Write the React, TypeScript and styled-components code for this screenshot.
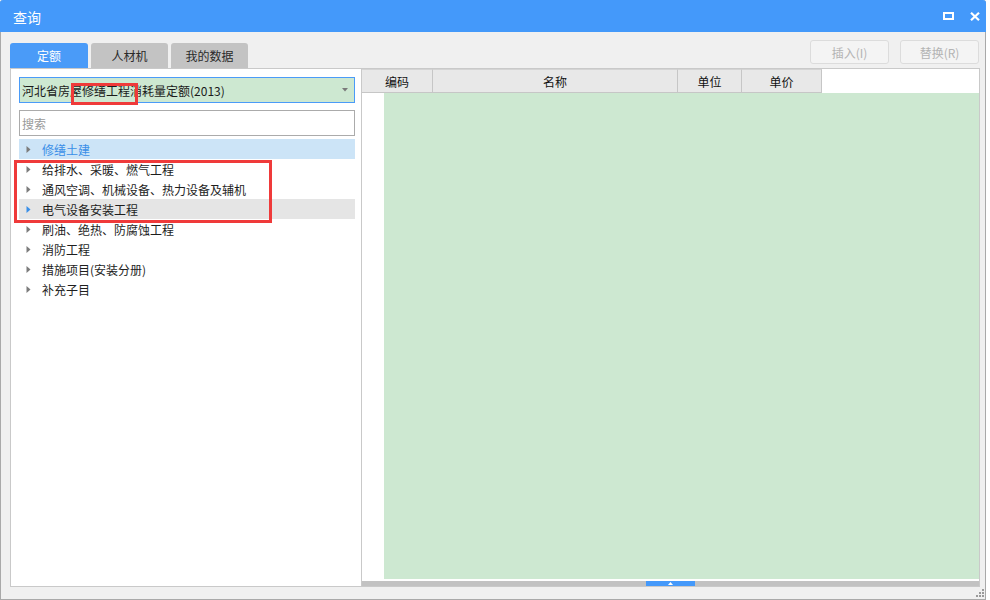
import React from 'react';
import styled, { createGlobalStyle } from 'styled-components';

const Global = createGlobalStyle`
  html, body { margin: 0; padding: 0; background: #ffffff; }
  body {
    font-family: "Noto Sans CJK SC", "Microsoft YaHei", "Liberation Sans", sans-serif;
    font-size: 12px;
    color: #1e1e1e;
  }
  * { box-sizing: border-box; }
`;

const Window = styled.div`
  position: relative;
  width: 986px;
  height: 600px;
  border: 1px solid #a9a9a9;
  border-top: none;
  border-radius: 3px 3px 0 0;
  background: #f0f0f0;
  display: flex;
  flex-direction: column;
`;

const TitleBar = styled.div`
  height: 32px;
  background: #4499fa;
  border-radius: 3px 3px 0 0;
  display: flex;
  align-items: center;
  padding: 0 5px 0 12px;
  color: #ffffff;
  font-size: 14px;
  margin: 0 -1px;
  padding-left: 13px;
  padding-right: 6px;
`;

const Title = styled.span`
  flex: 1;
  line-height: 32px;
  padding-top: 1px;
`;

const WinControls = styled.div`
  display: flex;
  align-items: center;
  gap: 16px;
`;

const Toolbar = styled.div`
  height: 36px;
  display: flex;
  align-items: flex-end;
  padding: 0 5px 0 9px;
`;

const Tabs = styled.div`
  display: flex;
  gap: 3px;
`;

const Tab = styled.div<{ $active?: boolean }>`
  width: ${(p) => (p.$active ? 78 : 77)}px;
  height: 25px;
  border-radius: 3px 3px 0 0;
  background: ${(p) => (p.$active ? '#4a9bf8' : '#c3c3c3')};
  color: ${(p) => (p.$active ? '#ffffff' : '#2a2a2a')};
  display: flex;
  align-items: center;
  justify-content: center;
  font-size: 12px;
`;

const Buttons = styled.div`
  margin-left: auto;
  align-self: flex-start;
  margin-top: 8px;
  margin-right: 1px;
  display: flex;
  gap: 11px;
`;

const Btn = styled.div`
  width: 79px;
  height: 24px;
  border: 1px solid #dcdcdc;
  border-radius: 3px;
  background: #f4f4f4;
  color: #b3b3b3;
  display: flex;
  align-items: center;
  justify-content: center;
  font-size: 12px;
`;

const Panel = styled.div`
  margin-left: 9px;
  margin-right: 5px;
  height: 519px;
  border: 1px solid #c9c9c9;
  background: #ffffff;
  display: flex;
`;

const LeftPane = styled.div`
  width: 351px;
  border-right: 1px solid #c9c9c9;
  padding: 8px 6px 0 8px;
  display: flex;
  flex-direction: column;
`;

const Combo = styled.div`
  height: 26px;
  border: 1px solid #4a9bf8;
  background: #cde8d1;
  display: flex;
  align-items: center;
  padding: 0 6px 0 2px;
  color: #1a1a1a;
`;

const ComboText = styled.span`
  flex: 1;
`;

const Search = styled.div`
  margin-top: 7px;
  height: 26px;
  border: 1px solid #ababab;
  display: flex;
  align-items: center;
  padding-left: 2px;
  color: #9a9a9a;
`;

const Tree = styled.div`
  margin-top: 3px;
  display: flex;
  flex-direction: column;
  width: 336px;
`;

const TreeRow = styled.div<{ $state?: 'selected' | 'hover' }>`
  height: 20px;
  display: flex;
  align-items: center;
  padding-left: 7px;
  gap: 11px;
  background: ${(p) =>
    p.$state === 'selected' ? '#cce4f7' : p.$state === 'hover' ? '#e5e5e5' : 'transparent'};
  color: ${(p) => (p.$state === 'selected' ? '#3a8fe8' : '#1e1e1e')};
`;

const RightPane = styled.div`
  flex: 1;
  display: flex;
  flex-direction: column;
`;

const Header = styled.div`
  height: 24px;
  display: flex;
`;

const HeadCell = styled.div<{ $w: number }>`
  width: ${(p) => p.$w}px;
  background: #e8e8e8;
  border-top: 1px solid #d4d4d4;
  border-right: 1px solid #c6c6c6;
  border-bottom: 1px solid #c6c6c6;
  display: flex;
  align-items: center;
  justify-content: center;
  color: #111;
`;

const GridBody = styled.div`
  flex: 1;
  display: flex;
`;

const RowHeads = styled.div`
  width: 22px;
  background: #ffffff;
`;

const Cells = styled.div`
  flex: 1;
  background: #cde8d1;
`;

const ScrollGap = styled.div`
  height: 2px;
`;

const HScroll = styled.div`
  height: 5px;
  background: #c2c2c2;
  display: flex;
`;

const Thumb = styled.div`
  width: 49px;
  height: 5px;
  background: #4499fa;
  display: flex;
  align-items: center;
  justify-content: center;
`;

const Grip = styled.svg`
  position: absolute;
  right: 1px;
  bottom: 2px;
`;

const Mark = styled.div`
  position: absolute;
  border: 3px solid #ef3a3a;
  pointer-events: none;
`;

const Arrow = ({ color }: { color: string }) => (
  <svg width="5" height="7" viewBox="0 0 5 7">
    <path d="M0.5 0 L4.5 3.5 L0.5 7 Z" fill={color} />
  </svg>
);

const items: { label: string; state?: 'selected' | 'hover' }[] = [
  { label: '修缮土建', state: 'selected' },
  { label: '给排水、采暖、燃气工程' },
  { label: '通风空调、机械设备、热力设备及辅机' },
  { label: '电气设备安装工程', state: 'hover' },
  { label: '刷油、绝热、防腐蚀工程' },
  { label: '消防工程' },
  { label: '措施项目(安装分册)' },
  { label: '补充子目' },
];

export default function App() {
  return (
    <>
      <Global />
      <Window>
        <TitleBar>
          <Title>查询</Title>
          <WinControls>
            <svg width="11" height="8" viewBox="0 0 11 8">
              <rect x="1" y="1" width="9" height="6" fill="none" stroke="#fff" strokeWidth="2" />
            </svg>
            <svg width="10" height="9" viewBox="0 0 10 9">
              <path d="M1 0.8 L9 8.2 M9 0.8 L1 8.2" stroke="#fff" strokeWidth="2.2" />
            </svg>
          </WinControls>
        </TitleBar>
        <Toolbar>
          <Tabs>
            <Tab $active>定额</Tab>
            <Tab>人材机</Tab>
            <Tab>我的数据</Tab>
          </Tabs>
          <Buttons>
            <Btn>插入(I)</Btn>
            <Btn>替换(R)</Btn>
          </Buttons>
        </Toolbar>
        <Panel>
          <LeftPane>
            <Combo>
              <ComboText>河北省房屋修缮工程消耗量定额(2013)</ComboText>
              <svg width="6" height="4" viewBox="0 0 6 4">
                <path d="M0 0 L6 0 L3 3.5 Z" fill="#7a7a7a" />
              </svg>
            </Combo>
            <Search>搜索</Search>
            <Tree>
              {items.map((it) => (
                <TreeRow key={it.label} $state={it.state}>
                  <Arrow color={it.state === 'hover' ? '#3a8fe8' : '#7c7c7c'} />
                  <span>{it.label}</span>
                </TreeRow>
              ))}
            </Tree>
          </LeftPane>
          <RightPane>
            <Header>
              <HeadCell $w={71}>编码</HeadCell>
              <HeadCell $w={245}>名称</HeadCell>
              <HeadCell $w={64}>单位</HeadCell>
              <HeadCell $w={80}>单价</HeadCell>
            </Header>
            <GridBody>
              <RowHeads />
              <Cells />
            </GridBody>
            <ScrollGap />
            <HScroll>
              <Thumb style={{ marginLeft: 284 }}>
                <svg width="5" height="3" viewBox="0 0 5 3">
                  <path d="M0 3 L2.5 0 L5 3 Z" fill="#fff" />
                </svg>
              </Thumb>
            </HScroll>
          </RightPane>
        </Panel>
        <Grip width="8" height="8" viewBox="0 0 8 8">
          <rect x="6" y="0" width="2" height="2" fill="#9a9a9a" />
          <rect x="3" y="3" width="2" height="2" fill="#9a9a9a" />
          <rect x="6" y="3" width="2" height="2" fill="#9a9a9a" />
          <rect x="0" y="6" width="2" height="2" fill="#9a9a9a" />
          <rect x="3" y="6" width="2" height="2" fill="#9a9a9a" />
          <rect x="6" y="6" width="2" height="2" fill="#9a9a9a" />
        </Grip>
        <Mark style={{ left: 70, top: 83, width: 67, height: 22 }} />
        <Mark style={{ left: 13, top: 160, width: 258, height: 63 }} />
      </Window>
    </>
  );
}
